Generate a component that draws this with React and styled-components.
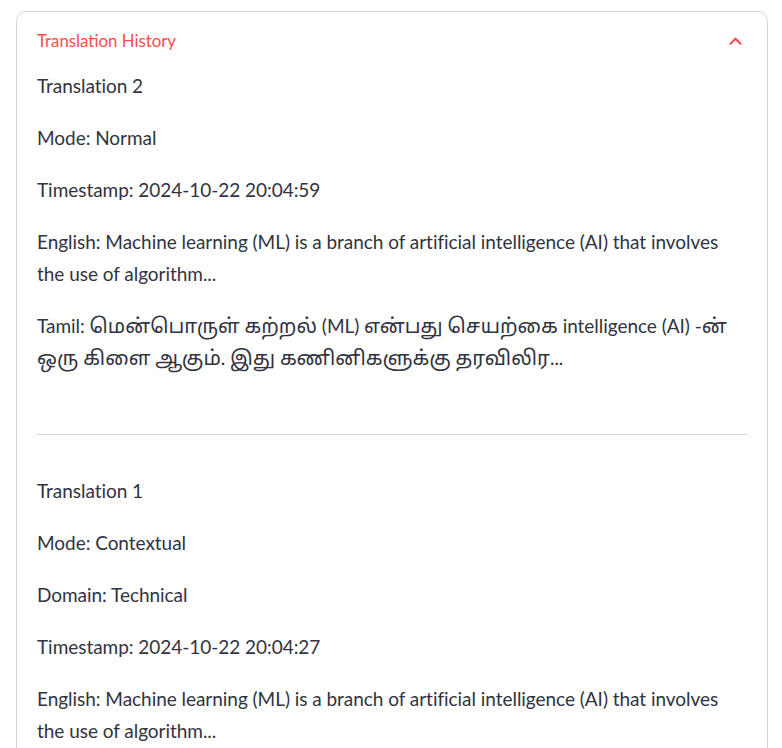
import React from "react";
import styled, { createGlobalStyle } from "styled-components";

const Global = createGlobalStyle`
  html, body { margin: 0; padding: 0; overflow: hidden; background: #ffffff; }
  body { font-family: Lato, "Noto Sans Tamil", "Noto Sans", sans-serif; color: #31333f; }
`;

const Page = styled.div`
  padding: 11px 14px 0 16px;
`;

const Expander = styled.details`
  border: 1px solid rgba(49, 51, 63, 0.2);
  border-radius: 10px;
`;

const Summary = styled.summary`
  list-style: none;
  display: flex;
  align-items: center;
  justify-content: space-between;
  padding: 16px 20px 0 20px;
  height: 26px;
  cursor: pointer;
  color: #ff4b4b;
  font-size: 16.8px;
  line-height: 26px;
  &::-webkit-details-marker { display: none; }
`;

const Chevron = styled.svg`
  width: 25px;
  height: 25px;
  fill: #ff4b4b;
  margin-right: -1px;
`;

const Body = styled.div`
  padding: 16px 20px 20px 20px;
`;

const Entry = styled.div`
  display: flex;
  flex-direction: column;
  gap: 20px;
`;

const Para = styled.p`
  margin: 0;
  font-size: 19px;
  letter-spacing: -0.04px;
  line-height: 32px;
`;

const Tamil = styled.span`
  font-size: 20.3px;
  letter-spacing: 0;
  line-height: 16px;
`;

const Divider = styled.hr`
  border: none;
  border-top: 1px solid rgba(49, 51, 63, 0.2);
  margin: 60px 0 40px 0;
`;

const renderText = (text) =>
  text.split(/([\u0B80-\u0BFF]+)/).map((part, i) =>
    /[\u0B80-\u0BFF]/.test(part) ? <Tamil key={i}>{part}</Tamil> : part
  );

const entries = [
  {
    lines: [
      "Translation 2",
      "Mode: Normal",
      "Timestamp: 2024-10-22 20:04:59",
      "English: Machine learning (ML) is a branch of artificial intelligence (AI) that involves the use of algorithm...",
      "Tamil: மென்பொருள் கற்றல் (ML) என்பது செயற்கை intelligence (AI) -ன் ஒரு கிளை ஆகும். இது கணினிகளுக்கு தரவிலிர...",
    ],
  },
  {
    lines: [
      "Translation 1",
      "Mode: Contextual",
      "Domain: Technical",
      "Timestamp: 2024-10-22 20:04:27",
      "English: Machine learning (ML) is a branch of artificial intelligence (AI) that involves the use of algorithm...",
      "Tamil: இயந்திரக் கற்றல் (ML) என்பது செயற்கை நுண்ணறிவின் (AI) ஒரு கிளையாகும், இது வழிமுறைகளைப் பயன்படுத்துவதை...",
    ],
  },
];

export default function App() {
  return (
    <Page>
      <Global />
      <Expander open>
        <Summary>
          <span>Translation History</span>
          <Chevron viewBox="0 0 24 24">
            <path d="M12 8l-6 6 1.41 1.41L12 10.83l4.59 4.58L18 14z" />
          </Chevron>
        </Summary>
        <Body>
          {entries.map((e, i) => (
            <React.Fragment key={i}>
              {i > 0 && <Divider />}
              <Entry>
                {e.lines.map((l, j) => (
                  <Para key={j}>{renderText(l)}</Para>
                ))}
              </Entry>
            </React.Fragment>
          ))}
        </Body>
      </Expander>
    </Page>
  );
}
